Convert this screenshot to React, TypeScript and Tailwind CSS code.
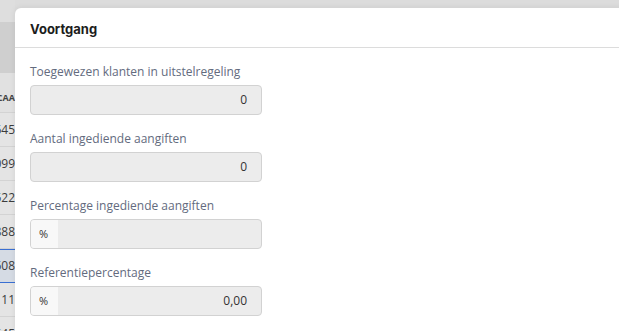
import React from "react";

const rows = [
    { value: "12645", active: false },
    { value: "45099", active: false },
    { value: "67522", active: false },
    { value: "34888", active: false },
    { value: "23608", active: true },
    { value: "4 11", active: false },
    { value: "12645", active: false },
];

function Field({ label, value, prefix }: { label: string; value?: string; prefix?: string }) {
    return (
        <div className="flex flex-col">
            <div className="h-[18px] leading-[20px] text-[12px] text-[#636b7e] mb-[5px]">{label}</div>
            <div className="w-[232px] h-[30px] flex rounded-[4px] border border-[#d2d2d2] bg-[#ececec] overflow-hidden">
                {prefix && (
                    <div className="w-[27px] h-full bg-[#f8f8f8] flex items-center pl-[8px] text-[11px] text-[#333]">{prefix}</div>
                )}
                <div className="flex-1 h-full flex items-center justify-end pr-[14px] text-[12px] text-[#333]">{value}</div>
            </div>
        </div>
    );
}

export default function App() {
    return (
        <div className="relative w-[619px] h-[331px] overflow-hidden bg-[#dcdcdc]" style={{ fontFamily: '"Open Sans", sans-serif' }}>
            {/* page behind the dialog, dimmed */}
            <div className="w-[15px] h-full flex flex-col overflow-hidden">
                <div className="h-[22px] shrink-0 bg-[#dedede]" />
                <div className="h-[51px] shrink-0 bg-[#cfcfcf]" />
                <div className="h-[40px] shrink-0 bg-[#e1e1e1] border-b border-[#d3d3d3] flex items-center justify-end pt-[10px]">
                    <span className="text-[9px] font-bold text-[#444] whitespace-nowrap">KCAA</span>
                </div>
                {rows.map((row, index) => (
                    <div
                        key={index}
                        className={`h-[34px] shrink-0 flex items-center justify-end border-b ${row.active ? "bg-[#d5dbe4] border-[#3a6fd2] border-t" : "bg-[#e4e4e4] border-[#d3d3d3]"}`}
                    >
                        <span className="text-[12px] text-[#3c3c3c] whitespace-nowrap">{row.value}</span>
                    </div>
                ))}
            </div>

            {/* dialog */}
            <div className="absolute left-[15px] top-[8px] w-[640px] h-[340px] bg-white rounded-[6px] shadow-[0_0_6px_rgba(0,0,0,0.08)]">
                <div className="h-[40px] flex items-center px-[15px] pt-[4px] border-b border-[#dcdcdc]">
                    <span className="text-[13px] font-bold text-[#1c1c1c]" style={{ fontFamily: '"Inter", sans-serif' }}>Voortgang</span>
                </div>
                <div className="pt-[14px] px-[15px] flex flex-col gap-[14px]">
                    <Field label="Toegewezen klanten in uitstelregeling" value="0" />
                    <Field label="Aantal ingediende aangiften" value="0" />
                    <Field label="Percentage ingediende aangiften" prefix="%" />
                    <Field label="Referentiepercentage" prefix="%" value="0,00" />
                </div>
            </div>
        </div>
    );
}
